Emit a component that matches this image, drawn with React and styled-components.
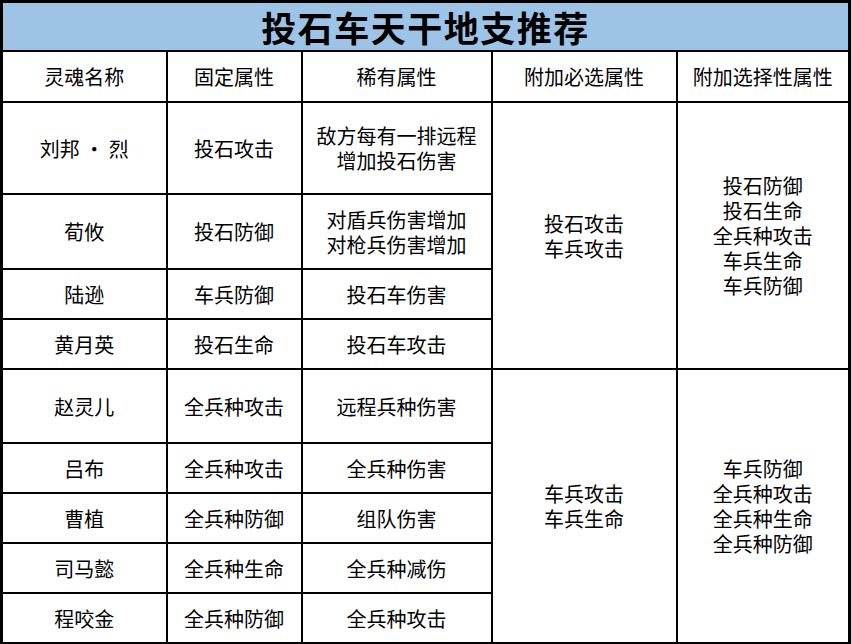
import React from 'react';
import styled, { createGlobalStyle } from 'styled-components';

const GlobalStyle = createGlobalStyle`
  html, body { margin: 0; padding: 0; background: #fff; }
  body { font-family: "Noto Sans CJK SC", "Liberation Sans", sans-serif; }
`;

const Table = styled.table`
  width: 851px;
  height: 644px;
  border-collapse: collapse;
  table-layout: fixed;
  border: 3px solid #000;
  color: #000;
`;

const Title = styled.th`
  height: 47px;
  background: #9dc3e6;
  font-size: 35px;
  font-weight: 700;
  letter-spacing: 1.5px;
  text-align: center;
  border: 2px solid #000;
  padding: 0;
  line-height: 1;
`;

const Head = styled.th`
  height: 49px;
  font-size: 20px;
  font-weight: 400;
  border: 2px solid #000;
  padding: 0;
  text-align: center;
`;

const Cell = styled.td`
  height: ${(p) => p.$h}px;
  font-size: 20px;
  line-height: 25px;
  border: 2px solid #000;
  padding: 0;
  text-align: center;
  vertical-align: middle;
  white-space: nowrap;
`;

const groups = [
  {
    must: ['投石攻击', '车兵攻击'],
    opt: ['投石防御', '投石生命', '全兵种攻击', '车兵生命', '车兵防御'],
    rows: [
      { name: '刘邦 • 烈', fixed: '投石攻击', rare: ['敌方每有一排远程', '增加投石伤害'], h: 90 },
      { name: '荀攸', fixed: '投石防御', rare: ['对盾兵伤害增加', '对枪兵伤害增加'], h: 73 },
      { name: '陆逊', fixed: '车兵防御', rare: ['投石车伤害'], h: 48 },
      { name: '黄月英', fixed: '投石生命', rare: ['投石车攻击'], h: 48 },
    ],
  },
  {
    must: ['车兵攻击', '车兵生命'],
    opt: ['车兵防御', '全兵种攻击', '全兵种生命', '全兵种防御'],
    rows: [
      { name: '赵灵儿', fixed: '全兵种攻击', rare: ['远程兵种伤害'], h: 72 },
      { name: '吕布', fixed: '全兵种攻击', rare: ['全兵种伤害'], h: 48 },
      { name: '曹植', fixed: '全兵种防御', rare: ['组队伤害'], h: 48 },
      { name: '司马懿', fixed: '全兵种生命', rare: ['全兵种减伤'], h: 48 },
      { name: '程咬金', fixed: '全兵种防御', rare: ['全兵种攻击'], h: 48 },
    ],
  },
];

const lines = (arr) =>
  arr.map((t, i) => (
    <React.Fragment key={i}>
      {i > 0 && <br />}
      {t}
    </React.Fragment>
  ));

export default function App() {
  return (
    <>
      <GlobalStyle />
      <Table>
        <colgroup>
          <col style={{ width: 165 }} />
          <col style={{ width: 135 }} />
          <col style={{ width: 190 }} />
          <col style={{ width: 185 }} />
          <col />
        </colgroup>
        <thead>
          <tr>
            <Title colSpan={5}>投石车天干地支推荐</Title>
          </tr>
          <tr>
            <Head>灵魂名称</Head>
            <Head>固定属性</Head>
            <Head>稀有属性</Head>
            <Head>附加必选属性</Head>
            <Head>附加选择性属性</Head>
          </tr>
        </thead>
        <tbody>
          {groups.map((g) =>
            g.rows.map((r, i) => (
              <tr key={r.name}>
                <Cell $h={r.h}>{r.name}</Cell>
                <Cell $h={r.h}>{r.fixed}</Cell>
                <Cell $h={r.h}>{lines(r.rare)}</Cell>
                {i === 0 && (
                  <>
                    <Cell rowSpan={g.rows.length}>{lines(g.must)}</Cell>
                    <Cell rowSpan={g.rows.length}>{lines(g.opt)}</Cell>
                  </>
                )}
              </tr>
            ))
          )}
        </tbody>
      </Table>
    </>
  );
}
